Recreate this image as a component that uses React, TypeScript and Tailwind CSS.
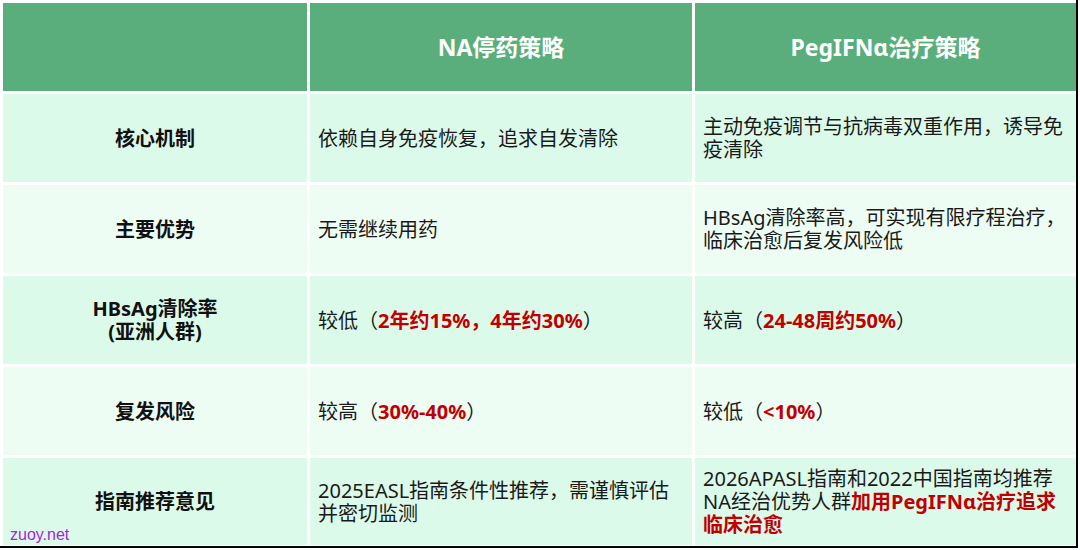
import React from "react";

const R = ({ children }: { children: React.ReactNode }) => (
  <span className="font-bold text-[#c00000]">{children}</span>
);

export default function App() {
  const font = { fontFamily: '"Noto Sans", "Noto Sans CJK SC", sans-serif' };
  const label = "flex items-center justify-center text-center font-bold text-[20px] leading-[23px] text-[#111]";
  const cell = "flex items-center px-[8px] text-[20px] leading-[23px] text-[#1a1a1a]";
  const odd = "bg-[#dcfaea]";
  const even = "bg-[#eefdf4]";
  const head = "bg-[#5aae7b] flex items-center justify-center text-white font-bold text-[23px]";
  return (
    <div className="relative w-[1080px] h-[550px] bg-white overflow-hidden" style={font}>
      <div className="w-[1078px] h-[548px] border-r-2 border-b-2 border-black">
        <div className="grid grid-cols-[304px_382px_381px] grid-rows-[88px_88px_88px_88px_88px_87px] gap-[3px] pl-[3px] pt-[3px]">
          <div className="bg-[#5aae7b]" />
          <div className={head}>NA停药策略</div>
          <div className={head}>PegIFNα治疗策略</div>

          <div className={`${odd} ${label}`}>核心机制</div>
          <div className={`${odd} ${cell}`}>依赖自身免疫恢复，追求自发清除</div>
          <div className={`${odd} ${cell}`}><span>主动免疫调节与抗病毒双重作用，诱导免<br />疫清除</span></div>

          <div className={`${even} ${label}`}>主要优势</div>
          <div className={`${even} ${cell}`}>无需继续用药</div>
          <div className={`${even} ${cell}`}><span>HBsAg清除率高，可实现有限疗程治疗，<br />临床治愈后复发风险低</span></div>

          <div className={`${odd} ${label}`}><span>HBsAg清除率<br />(亚洲人群)</span></div>
          <div className={`${odd} ${cell}`}><span>较低（<R>2年约15%，4年约30%</R>）</span></div>
          <div className={`${odd} ${cell}`}><span>较高（<R>24-48周约50%</R>）</span></div>

          <div className={`${even} ${label}`}>复发风险</div>
          <div className={`${even} ${cell}`}><span>较高（<R>30%-40%</R>）</span></div>
          <div className={`${even} ${cell}`}><span>较低（<R>&lt;10%</R>）</span></div>

          <div className={`${odd} ${label}`}>指南推荐意见</div>
          <div className={`${odd} ${cell}`}><span>2025EASL指南条件性推荐，需谨慎评估<br />并密切监测</span></div>
          <div className={`${odd} ${cell}`}><span className="whitespace-nowrap">2026APASL指南和2022中国指南均推荐<br />NA经治优势人群<R>加用PegIFNα治疗追求</R><br /><R>临床治愈</R></span></div>
        </div>
      </div>
      <div className="absolute left-[10px] top-[523px] text-[16px] leading-[24px] text-[#a526d8]" style={{ fontFamily: '"Liberation Sans", Arial, sans-serif' }}>zuoy.net</div>
    </div>
  );
}
